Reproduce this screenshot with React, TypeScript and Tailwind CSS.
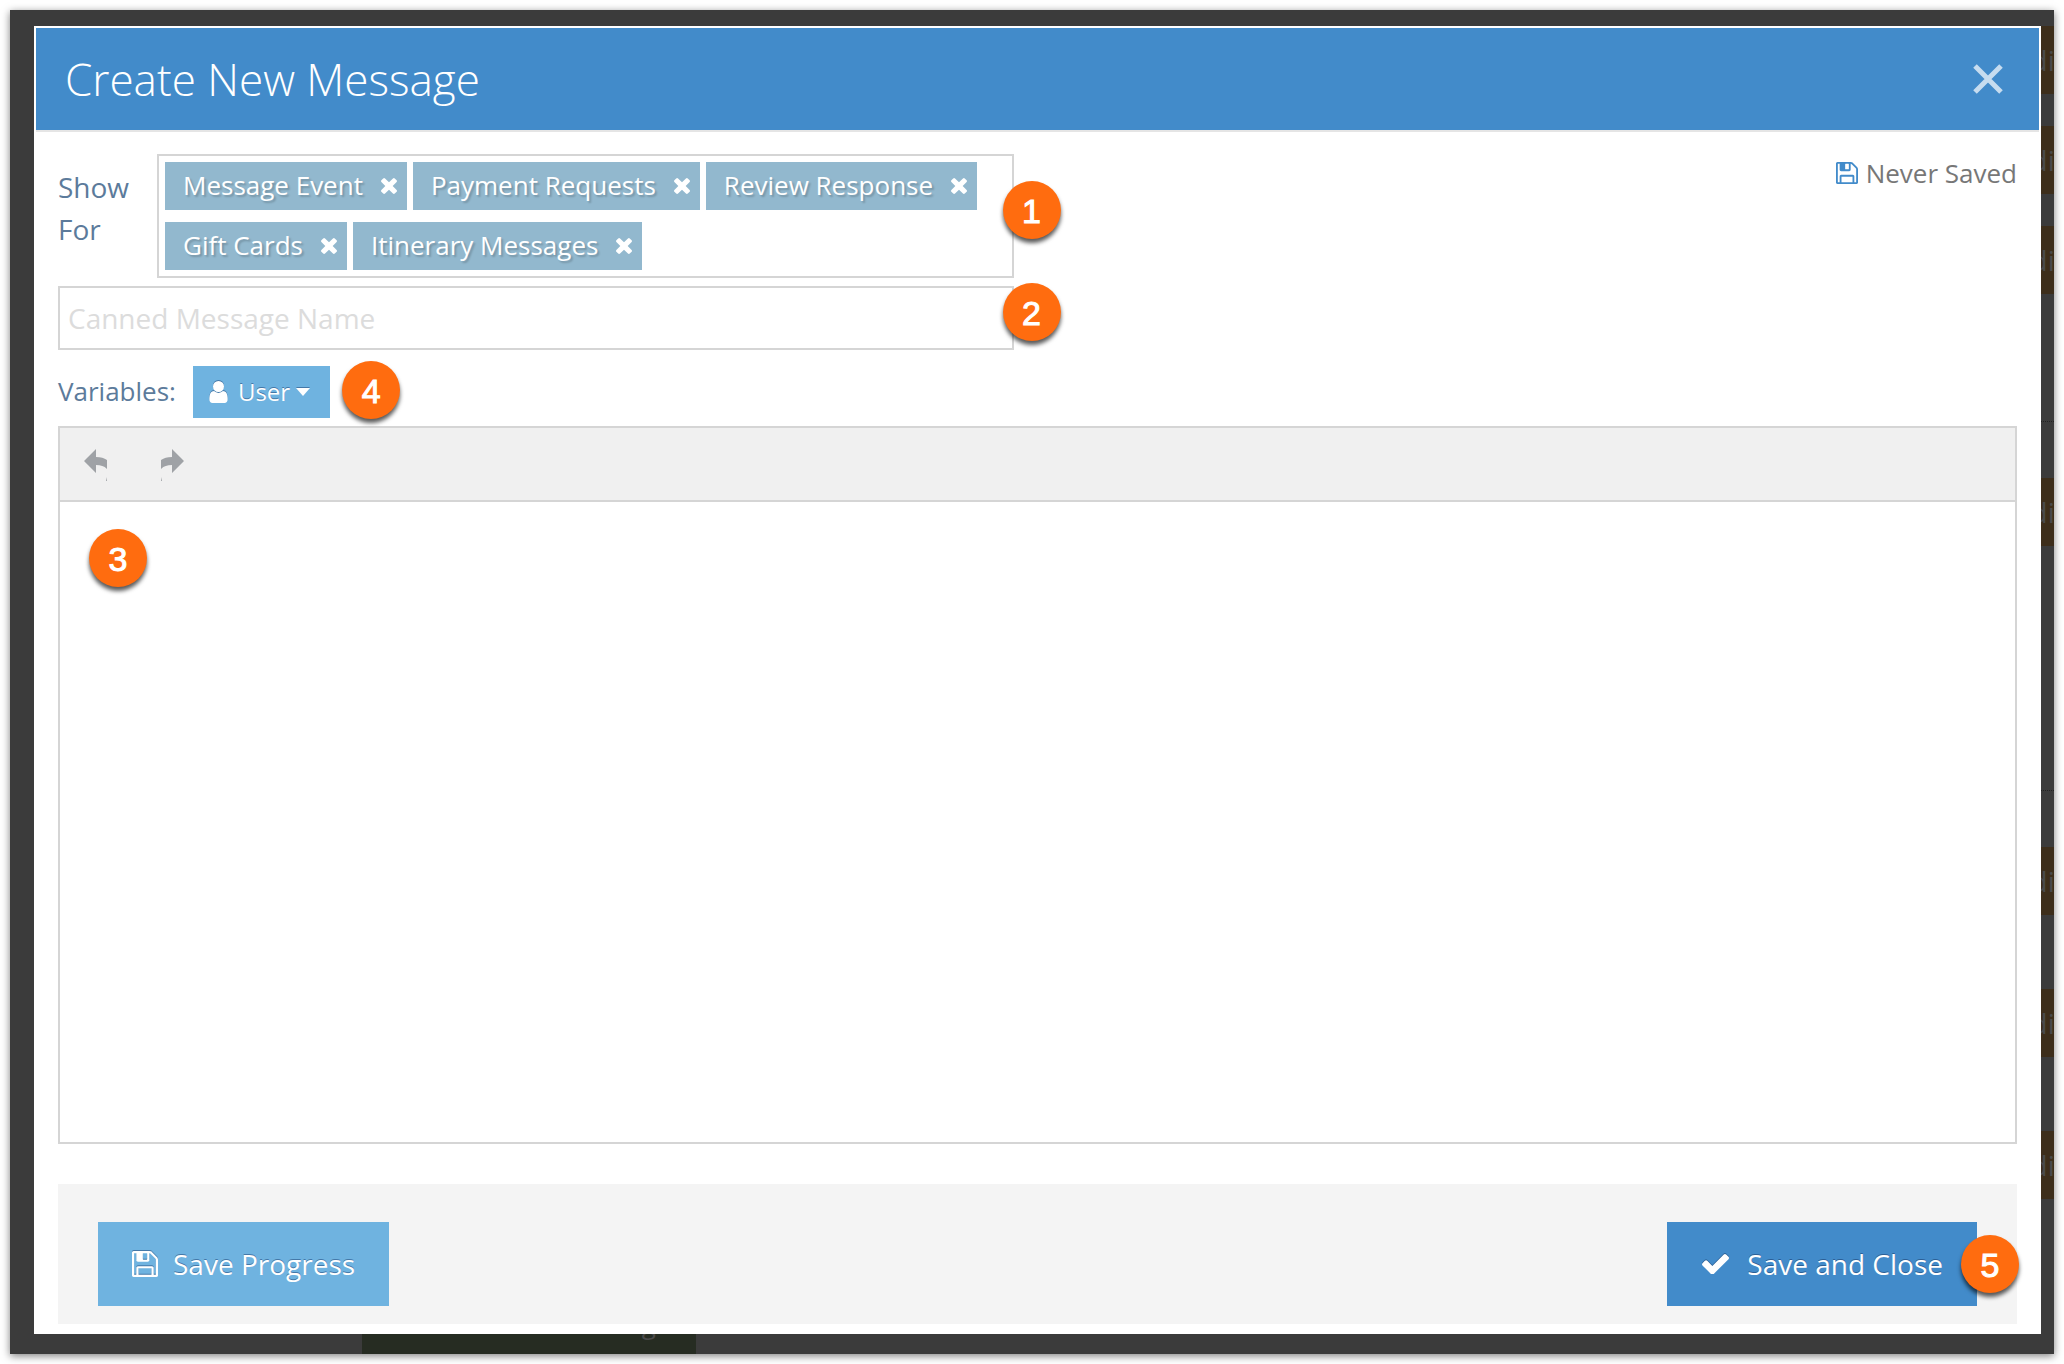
import React, { useState } from "react";

const ICONS = {
  times: {
    viewBox: "302 366 1188 1188",
    d: "M1490 1322q0 40-28 68l-136 136q-28 28-68 28t-68-28l-294-294-294 294q-28 28-68 28t-68-28l-136-136q-28-28-28-68t28-68l294-294-294-294q-28-28-28-68t28-68l136-136q28-28 68-28t68 28l294 294 294-294q28-28 68-28t68 28l136 136q28 28 28 68t-28 68l-294 294 294 294q28 28 28 68z",
  },
  check: {
    viewBox: "121 334 1550 1188",
    d: "M1671 566q0 40-28 68l-724 724-136 136q-28 28-68 28t-68-28l-136-136-362-362q-28-28-28-68t28-68l136-136q28-28 68-28t68 28l294 295 656-657q28-28 68-28t68 28l136 136q28 28 28 68z",
  },
  floppy: {
    viewBox: "128 128 1536 1536",
    d: "M512 1536h768v-384h-768v384zm896 0h128v-896q0-14-10-38.5t-20-34.5l-281-281q-10-10-34-20t-39-10v416q0 40-28 68t-68 28h-576q-40 0-68-28t-28-68v-416h-128v1280h128v-416q0-40 28-68t68-28h832q40 0 68 28t28 68v416zm-384-928v-320q0-13-9.5-22.5t-22.5-9.5h-192q-13 0-22.5 9.5t-9.5 22.5v320q0 13 9.5 22.5t22.5 9.5h192q13 0 22.5-9.5t9.5-22.5zm640 32v928q0 40-28 68t-68 28h-1344q-40 0-68-28t-28-68v-1344q0-40 28-68t68-28h928q40 0 88 20t76 48l280 280q28 28 48 76t20 88z",
  },
  user: {
    viewBox: "256 128 1280 1536",
    d: "M1536 1399q0 109-62.5 187t-150.5 78h-854q-88 0-150.5-78t-62.5-187q0-85 8.5-160.5t31.5-152 58.5-131 94-89 134.5-34.5q131 128 313 128t313-128q76 0 134.5 34.5t94 89 58.5 131 31.5 152 8.5 160.5zm-256-887q0 159-112.5 271.5t-271.5 112.5-271.5-112.5-112.5-271.5 112.5-271.5 271.5-112.5 271.5 112.5 112.5 271.5z",
  },
  caret: { viewBox: "0 0 14 8", d: "M0 0h14L7 8z" },
  undo: { viewBox: "0 0 23 32", d: "M0 12 12 0v8c5 0 8 1 11 3v9c-3-3-6-4-11-4v8zM23 28v4h-1z" },
  redo: { viewBox: "0 0 23 32", d: "M23 12 11 0v8C6 8 3 9 0 11v9c3-3 6-4 11-4v8zM0 28v4h1z" },
};

function Icon({ name, className }: { name: keyof typeof ICONS; className?: string }) {
  return (
    <svg viewBox={ICONS[name].viewBox} fill="currentColor" className={className} aria-hidden="true">
      <path d={ICONS[name].d} />
    </svg>
  );
}

function Badge({ n, className }: { n: number; className: string }) {
  return (
    <span
      className={`absolute z-10 flex size-[58px] items-center justify-center rounded-full bg-[#ff6c0f] pt-0.5 text-[34px] leading-none text-white shadow-[0_4px_4px_rgba(0,0,0,0.65)] [-webkit-text-stroke:1px_white] font-['Liberation_Sans',sans-serif] ${className}`}
    >
      {n}
    </span>
  );
}

// Page content that stays visible around the modal, under the dark overlay
function DimmedPage() {
  const editClass = "flex h-[68px] shrink-0 items-center overflow-hidden bg-[#3d2e1b]";
  const editText = <span className="-ml-[26px]">Edit</span>;

  return (
    <div className="absolute inset-0 overflow-hidden text-[28px] text-[#4a4a4a]" aria-hidden="true">
      <div className="absolute inset-y-0 right-0 flex w-[13px] flex-col pt-4">
        <div className={editClass}>{editText}</div>
        <div className={`mt-8 ${editClass}`}>{editText}</div>
        <div className={`mt-8 ${editClass}`}>{editText}</div>
        <div className="mt-[127px] border-t border-dotted border-[#222]" />
        <div className={`mt-14 ${editClass}`}>{editText}</div>
        <div className="mt-[244px] border-t border-dotted border-[#222]" />
        <div className={`mt-14 ${editClass}`}>{editText}</div>
        <div className={`mt-[74px] ${editClass}`}>{editText}</div>
        <div className={`mt-[74px] ${editClass}`}>{editText}</div>
      </div>
      <div className="absolute bottom-0 left-[352px] flex h-16 w-[334px] items-start gap-3 bg-[#262c22] pt-[18px] pl-7 text-[26px] leading-8">
        <span>+</span>
        <span>Create New Message</span>
      </div>
    </div>
  );
}

const TAGS = ["Message Event", "Payment Requests", "Review Response", "Gift Cards", "Itinerary Messages"];

export default function App() {
  const [tags, setTags] = useState(TAGS);
  const [name, setName] = useState("");
  const [message, setMessage] = useState("");

  return (
    <div className="flex min-h-screen bg-white p-2.5 font-['Open_Sans',sans-serif]">
      <div className="relative flex flex-1 bg-[#3b3b3b] pt-4 pr-[13px] pb-5 pl-6 shadow-[0_2px_8px_rgba(0,0,0,0.5)]">
        <DimmedPage />
        <div
          role="dialog"
          aria-labelledby="modal-title"
          className="relative flex min-w-0 flex-1 flex-col border-2 border-white bg-white"
        >
          <header className="flex h-[104px] items-center justify-between border-b-2 border-[#e5e5e5] bg-[#428bca] pr-9 pl-[29px]">
            <h1 id="modal-title" className="text-[44px] leading-none font-light text-white">
              Create New Message
            </h1>
            <button type="button" aria-label="Close" className="text-white/70">
              <svg viewBox="0 0 30 30" className="size-[30px]" stroke="currentColor" strokeWidth="5" aria-hidden="true">
                <path d="M2 2l26 26M28 2L2 28" />
              </svg>
            </button>
          </header>

          <form onSubmit={e => e.preventDefault()} className="flex flex-1 flex-col px-[22px] pt-[22px] pb-2">
            <div className="flex items-start justify-between">
              <div className="w-[calc(50%-24px)]">
                <div className="relative flex">
                  <label htmlFor="show-for" className="w-[99px] shrink-0 pt-3 text-[28px] leading-[42px] text-[#5c7b9b]">
                    Show
                    <br />
                    For
                  </label>
                  <ul
                    id="show-for"
                    className="flex min-h-[124px] flex-1 flex-wrap content-start gap-x-1.5 gap-y-3 border-2 border-[#d5d5d5] p-1.5"
                  >
                    {tags.map(tag => (
                      <li
                        key={tag}
                        className="flex h-12 items-center gap-[18px] bg-[#92b8ce] pr-2.5 pb-0.5 pl-[18px] text-[26px] text-white [text-shadow:2px_2px_2px_rgba(0,0,0,0.2)]"
                      >
                        {tag}
                        <button
                          type="button"
                          aria-label={`Remove ${tag}`}
                          className="pt-0.5"
                          onClick={() => setTags(tags.filter(t => t !== tag))}
                        >
                          <Icon name="times" className="size-4" />
                        </button>
                      </li>
                    ))}
                  </ul>
                  <Badge n={1} className="top-[27px] -right-[47px]" />
                </div>

                <div className="relative mt-2">
                  <input
                    type="text"
                    aria-label="Canned Message Name"
                    placeholder="Canned Message Name"
                    value={name}
                    onChange={e => setName(e.target.value)}
                    className="block h-16 w-full border-2 border-[#d5d5d5] px-2 text-[28px] text-[#555] outline-none placeholder:text-[#dcdcdc]"
                  />
                  <Badge n={2} className="-top-[3px] -right-[47px]" />
                </div>
              </div>

              <div className="flex items-center gap-2 text-[26px] leading-[38px] text-[#777]">
                <Icon name="floppy" className="size-[22px] text-[#428bca]" />
                Never Saved
              </div>
            </div>

            <div className="mt-4 flex items-center text-[26px] text-[#5c7b9b]">
              <span className="pb-0.5">Variables:</span>
              <div className="relative ml-[17px]">
                <button
                  type="button"
                  className="flex h-[52px] items-center bg-[#6fb3e0] pr-5 pl-4 text-[24px] text-white [text-shadow:0_-1px_0_#4478a8]"
                >
                  <Icon name="user" className="mr-2.5 h-[22px] w-[19px] drop-shadow-[0_-1px_0_#4478a8]" />
                  User
                  <Icon name="caret" className="ml-1.5 h-2 w-3.5 drop-shadow-[0_-1px_0_#4478a8]" />
                </button>
                <Badge n={4} className="-top-[5px] -right-[70px]" />
              </div>
            </div>

            <div className="relative mt-2 flex flex-1 flex-col border-2 border-[#d5d5d5]">
              <div className="flex h-[74px] items-center gap-[54px] border-b-2 border-[#d5d5d5] bg-[#f0f0f0] px-6 pt-0.5 text-[#9fa2a6]">
                <button type="button" aria-label="Undo">
                  <Icon name="undo" className="h-8 w-[23px]" />
                </button>
                <button type="button" aria-label="Redo">
                  <Icon name="redo" className="h-8 w-[23px]" />
                </button>
              </div>
              <textarea
                aria-label="Message"
                value={message}
                onChange={e => setMessage(e.target.value)}
                className="w-full flex-1 resize-none p-4 text-[26px] text-[#555] outline-none"
              />
              <Badge n={3} className="top-[101px] left-[29px]" />
            </div>

            <footer className="mt-10 flex items-center justify-between bg-[#f4f4f4] px-10 pt-[38px] pb-[18px]">
              <button
                type="button"
                className="flex h-[84px] items-center gap-[15px] bg-[#6fb3e0] px-[34px] text-[28px] text-white [text-shadow:0_-1px_0_#4478a8]"
              >
                <Icon name="floppy" className="size-[26px] drop-shadow-[0_-1px_0_#4478a8]" />
                Save Progress
              </button>
              <div className="relative">
                <button
                  type="submit"
                  className="flex h-[84px] items-center gap-[18px] bg-[#428bca] pr-[34px] pl-[35px] text-[28px] text-white [text-shadow:0_-1px_0_#2c5f95]"
                >
                  <Icon name="check" className="w-[27px] drop-shadow-[0_-1px_0_#2c5f95]" />
                  Save and Close
                </button>
                <Badge n={5} className="top-[13px] -right-[42px]" />
              </div>
            </footer>
          </form>
        </div>
      </div>
    </div>
  );
}
